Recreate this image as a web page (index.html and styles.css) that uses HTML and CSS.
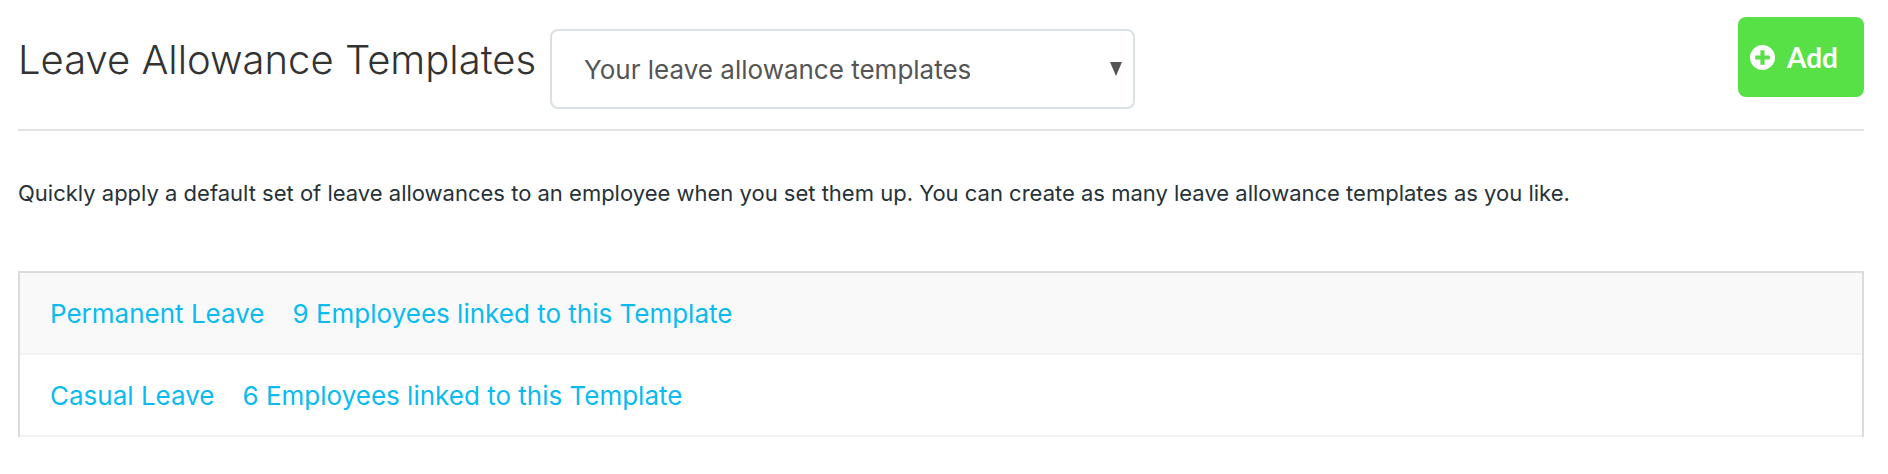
FILE: index.html
```html
<!DOCTYPE html>
<html lang="en">
	<head>
		<meta charset="UTF-8" />
		<meta name="viewport" content="width=device-width, initial-scale=1.0" />
		<title>Leave Allowance Templates</title>
		<link rel="stylesheet" href="styles.css">
	</head>
	<body>
		<header class="page-header">
			<h1>Leave Allowance Templates</h1>
			<div class="select-box">
				<select aria-label="Template list">
					<option>Your leave allowance templates</option>
				</select>
				<svg class="select-arrow" viewBox="0 0 12 14" aria-hidden="true">
					<path d="M0 0h12L6 14z" />
				</svg>
			</div>
			<button class="btn-add" type="button">
				<svg class="icon-plus" viewBox="0 0 24 24" aria-hidden="true">
					<path fill-rule="evenodd" d="M12 0a12 12 0 1 0 0 24a12 12 0 1 0 0-24zM10.5 5h3q.5 0 .5.5V10h4.500q.5 0 .5.5v3q0 .5-.5.5H14v4.500q0 .5-.5.5h-3q-.5 0-.5-.5V14H5.500q-.5 0-.5-.5v-3q0-.5.5-.5H10V5.500q0-.5.5-.5z" />
				</svg>
				<span>Add</span>
			</button>
		</header>
		<main>
			<p class="intro">Quickly apply a default set of leave allowances to an employee when you set them up. You can create as many leave allowance templates as you like.</p>
			<ul class="templates">
				<li>
					<a href="#">Permanent Leave</a>
					<a href="#">9 Employees linked to this Template</a>
				</li>
				<li>
					<a href="#">Casual Leave</a>
					<a href="#">6 Employees linked to this Template</a>
				</li>
			</ul>
		</main>
	</body>
</html>
```

FILE: styles.css
```css
* {
	margin: 0;
	padding: 0;
	box-sizing: border-box;
}
body {
	font-family: Inter, Lato, sans-serif;
	font-size: 26px;
	font-weight: 400;
	color: #263238;
	background: #fff;
	padding: 17px 24px 32px 18px;
}
.page-header {
	display: flex;
	align-items: flex-start;
	border-bottom: 2px solid #e2e2e2;
	padding-bottom: 20px;
}
.page-header h1 {
	font-size: 40px;
	font-weight: 300;
	line-height: 50px;
	color: #333;
	margin: 18px 14px 0 0;
}
.select-box {
	position: relative;
	flex: 0 1 585px;
	margin-top: 12px;
}
.select-box select {
	appearance: none;
	width: 100%;
	height: 80px;
	padding: 0 48px 0 32px;
	font-family: inherit;
	font-size: 26px;
	font-weight: 400;
	color: #555;
	background: #fff;
	border: 2px solid #dae1e5;
	border-radius: 8px;
}
.select-arrow {
	position: absolute;
	right: 13px;
	top: 33px;
	width: 12px;
	height: 14px;
	fill: #555;
	pointer-events: none;
}
.btn-add {
	display: flex;
	align-items: center;
	gap: 12px;
	height: 80px;
	margin-left: auto;
	padding: 0 26px 0 12px;
	font-family: Lato, sans-serif;
	font-size: 28px;
	font-weight: 700;
	color: #fff;
	background: #58e146;
	border: 0;
	border-radius: 8px;
	cursor: pointer;
}
.icon-plus {
	width: 25px;
	height: 25px;
	fill: #fff;
}
.intro {
	font-size: 22px;
	line-height: 32px;
	margin: 46px 0 62px;
}
.templates {
	list-style: none;
	border: 2px solid #dcdcdc;
	border-bottom: 0;
}
.templates li {
	display: flex;
	gap: 28px;
	align-items: center;
	min-height: 82px;
	padding: 20px 30px;
	border-bottom: 2px solid #f3f3f3;
}
.templates li:nth-child(odd) {
	background: #f9f9f9;
}
.templates a {
	color: #0bbbef;
	text-decoration: none;
}
```
